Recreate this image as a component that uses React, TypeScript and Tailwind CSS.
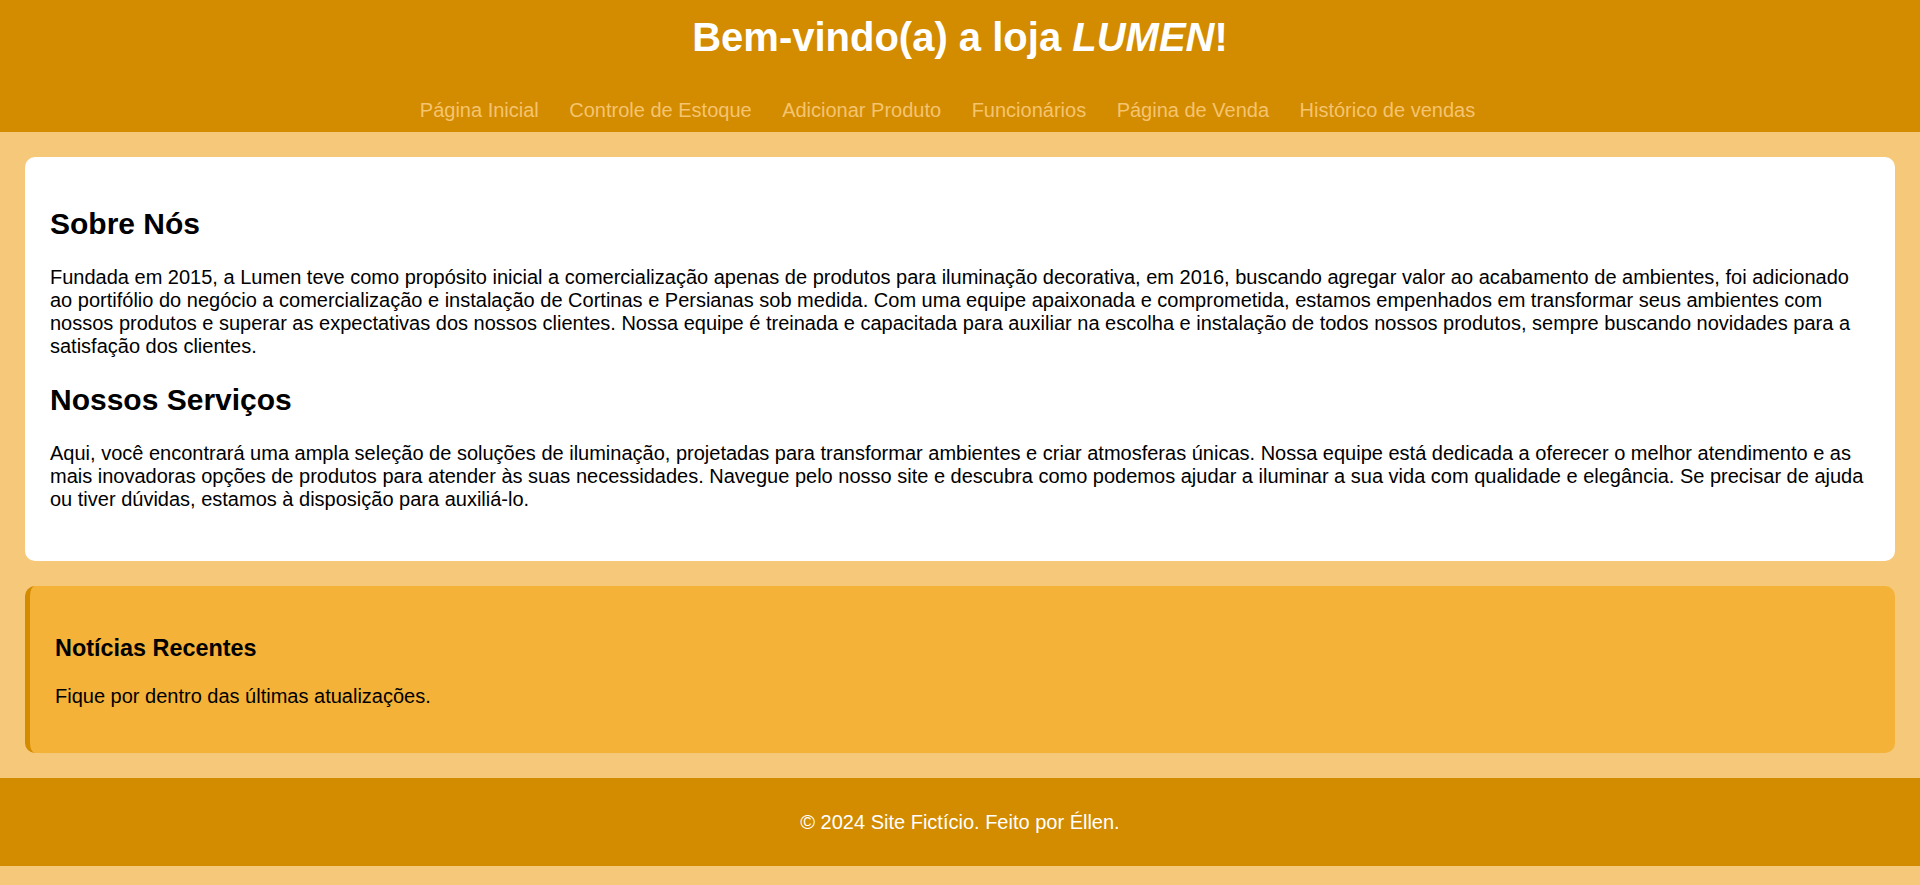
const links = [
  'Página Inicial',
  'Controle de Estoque',
  'Adicionar Produto',
  'Funcionários',
  'Página de Venda',
  'Histórico de vendas',
];

export default function App() {
  return (
    <div className="min-h-screen bg-[#f5c87a] font-['Liberation_Sans',Arial,sans-serif] text-[20px] leading-[normal] text-black">
      <header className="bg-[#d38b00] pt-[15px] pb-[10.8px] text-center">
        <h1 className="text-[40px] font-bold leading-[normal] text-white">
          Bem-vindo(a) a loja <em>LUMEN</em>!
        </h1>
        <nav className="mt-[38.5px] flex justify-center gap-[5.5px]">
          {links.map((link) => (
            <a key={link} href="#" className="mr-[25px] text-[20px] leading-[normal] text-[#f5c46f] no-underline">
              {link}
            </a>
          ))}
        </nav>
      </header>

      <main className="flex flex-col gap-[25px] p-[25px]">
        <div className="rounded-[10px] bg-white px-[25px] py-[25px]">
          <h2 className="my-[25px] text-[30px] font-bold leading-[normal]">Sobre Nós</h2>
          <p className="mb-[25px]">
            Fundada em 2015, a Lumen teve como propósito inicial a comercialização apenas de produtos para iluminação
            decorativa, em 2016, buscando agregar valor ao acabamento de ambientes, foi adicionado ao portifólio do negócio
            a comercialização e instalação de Cortinas e Persianas sob medida. Com uma equipe apaixonada e comprometida,
            estamos empenhados em transformar seus ambientes com nossos produtos e superar as expectativas dos nossos
            clientes. Nossa equipe é treinada e capacitada para auxiliar na escolha e instalação de todos nossos produtos,
            sempre buscando novidades para a satisfação dos clientes.
          </p>
          <h2 className="mb-[25px] text-[30px] font-bold leading-[normal]">Nossos Serviços</h2>
          <p className="mb-[25px]">
            Aqui, você encontrará uma ampla seleção de soluções de iluminação, projetadas para transformar ambientes e
            criar atmosferas únicas. Nossa equipe está dedicada a oferecer o melhor atendimento e as mais inovadoras
            opções de produtos para atender às suas necessidades. Navegue pelo nosso site e descubra como podemos ajudar a
            iluminar a sua vida com qualidade e elegância. Se precisar de ajuda ou tiver dúvidas, estamos à disposição para
            auxiliá-lo.
          </p>
        </div>

        <div className="rounded-[10px] border-l-[5px] border-[#d38b00] bg-[#f4b238] p-[25px]">
          <h3 className="my-[23.4px] text-[23.4px] font-bold leading-[normal]">Notícias Recentes</h3>
          <p className="mb-[20px]">Fique por dentro das últimas atualizações.</p>
        </div>
      </main>

      <footer className="bg-[#d38b00] py-[32.5px] text-center text-white">
        <p>© 2024 Site Fictício. Feito por Éllen.</p>
      </footer>
    </div>
  );
}
